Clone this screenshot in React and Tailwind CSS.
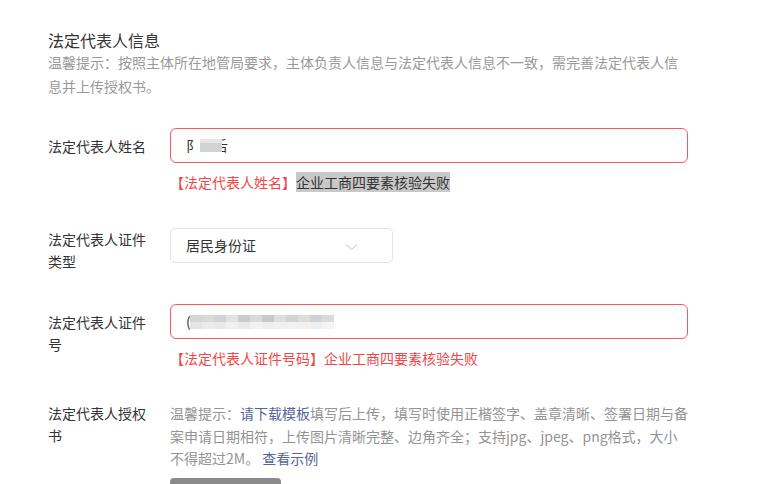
import { useState } from 'react';

const idMosaic = [
    ['#d6d6d6', '#dcd9d5', '#cfd3d9', '#e2e2e2', '#cbcbcb', '#d9d9d9', '#c8c8c8', '#dde0e3', '#d3d3d3', '#e0dcda', '#ced1d6', '#dadada'],
    ['#e4e4e4', '#ebebeb', '#e6e8ea', '#f0f0f0', '#e9e9e9', '#f2f2f2', '#eeeeee', '#eef0f2', '#f1f1f1', '#f3f1f0', '#eceef0', '#f4f4f4'],
];

function FieldLabel({ children, className = '' }) {
    return (
        <div className={`w-[100px] mr-[22px] shrink-0 text-[14px] leading-[22px] text-[#333] ${className}`}>
            {children}
        </div>
    );
}

function ErrorText({ field, highlight }) {
    return (
        <p className="mt-[9px] text-[14px] leading-[20px] text-[#f04848]">
            【{field}】
            {highlight
                ? <span className="bg-[#c8c8c8] text-[#333]">企业工商四要素核验失败</span>
                : '企业工商四要素核验失败'}
        </p>
    );
}

export default function App() {
    const [certType] = useState('居民身份证');

    return (
        <div className="h-screen bg-white font-['Noto_Sans_CJK_SC',sans-serif] overflow-hidden">
            <div className="pl-[48px] w-[688px]">

                {/* Section header */}
                <h2 className="pt-[30px] text-[16px] leading-[20px] text-[#333]">法定代表人信息</h2>
                <p className="text-[14px] leading-[24px] text-[#999]">
                    温馨提示：按照主体所在地管局要求，主体负责人信息与法定代表人信息不一致，需完善法定代表人信息并上传授权书。
                </p>

                {/* Name */}
                <div className="flex mt-[30px]">
                    <FieldLabel className="pt-[7px]">法定代表人姓名</FieldLabel>
                    <div className="flex-1">
                        <div className="h-[35px] border border-[#f25c5c] rounded-[6px] px-[15px] flex items-center text-[14px] text-[#333]">
                            <span>阝</span>
                            <span className="w-[22px] h-[13px] bg-[#d2d2d2] border-t-[4px] border-[#e6e6e6]" />
                            <span className="inline-flex w-[6px] overflow-hidden justify-end"><span>舌</span></span>
                        </div>
                        <ErrorText field="法定代表人姓名" highlight />
                    </div>
                </div>

                {/* Certificate type */}
                <div className="flex mt-[36px]">
                    <FieldLabel>法定代表人证件类型</FieldLabel>
                    <div className="flex-1">
                        <div className="w-[223px] h-[35px] border border-[#e4e4e4] rounded-[5px] pl-[15px] pr-[34px] flex items-center justify-between text-[14px] text-[#333]">
                            <span>{certType}</span>
                            <svg width="13" height="8" viewBox="0 0 13 8" className="text-[#bdbdbd] mt-[2px]">
                                <polyline points="1,1.5 6.5,6.5 12,1.5" fill="none" stroke="currentColor" strokeWidth="1" />
                            </svg>
                        </div>
                    </div>
                </div>

                {/* Certificate number */}
                <div className="flex mt-[32px]">
                    <FieldLabel className="pt-[7px]">法定代表人证件号</FieldLabel>
                    <div className="flex-1">
                        <div className="h-[35px] border border-[#f25c5c] rounded-[6px] px-[15px] flex items-center text-[14px] text-[#333]">
                            <span className="inline-flex w-[4px] overflow-hidden">(</span>
                            <div className="grid grid-cols-12">
                                {idMosaic.map((row, r) => row.map((c, i) => (
                                    <span key={`${r}-${i}`} className="w-[12px] h-[7px]" style={{ backgroundColor: c }} />
                                )))}
                            </div>
                        </div>
                        <ErrorText field="法定代表人证件号码" />
                    </div>
                </div>

                {/* Authorization letter */}
                <div className="flex mt-[34px]">
                    <FieldLabel>法定代表人授权书</FieldLabel>
                    <div className="w-[518px]">
                        <p className="text-[14px] leading-[22.5px] text-[#949494]">
                            温馨提示：<span className="text-[#56649a]">请下载模板</span>填写后上传，填写时使用正楷签字、盖章清晰、签署日期与备案申请日期相符，上传图片清晰完整、边角齐全；支持jpg、jpeg、png格式，大小不得超过2M。 <span className="text-[#56649a]">查看示例</span>
                        </p>
                        <button className="mt-[8px] w-[111px] h-[32px] rounded-[4px] bg-[#8a8a8a] text-[12px] text-[#b0b0b0]">
                            下载模板
                        </button>
                    </div>
                </div>
            </div>
        </div>
    );
}
